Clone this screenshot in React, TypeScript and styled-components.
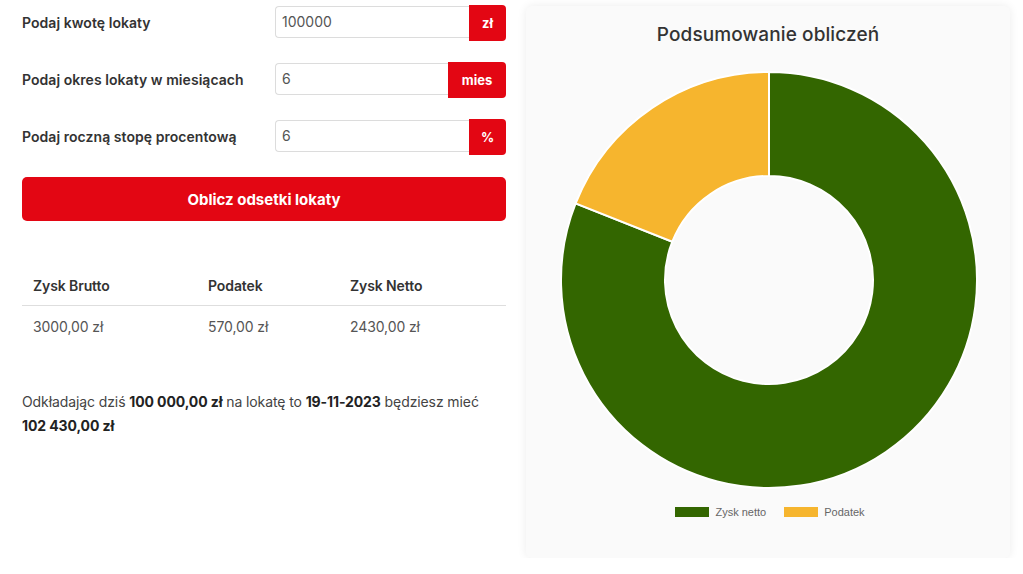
import React from "react";
import styled, { createGlobalStyle } from "styled-components";

const Global = createGlobalStyle`
  html, body { margin: 0; padding: 0; background: #ffffff; }
  body { font-family: Inter, "Open Sans", sans-serif; color: #333; }
`;

const Page = styled.div`
  display: flex;
  align-items: flex-start;
  gap: 20px;
  padding: 5px 13px 0 22px;
`;

const Left = styled.div`
  width: 484px;
  flex: none;
  display: flex;
  flex-direction: column;
`;

const Field = styled.div`
  display: flex;
  align-items: flex-start;
  height: 36px;
  margin-bottom: 21px;
`;

const Label = styled.label`
  width: 253px;
  flex: none;
  font-size: 14px;
  font-weight: 600;
  color: #333;
  line-height: 36px;
  letter-spacing: 0.05px;
`;

const InputBox = styled.div`
  flex: 1;
  height: 32px;
  margin-top: 1px;
  box-sizing: border-box;
  border: 1px solid #dcdcdc;
  border-right: none;
  border-radius: 4px 0 0 4px;
  padding: 0 6px;
  font-size: 14px;
  line-height: 30px;
  color: #555;
  background: #fff;
`;

const Addon = styled.div<{ $w: number }>`
  width: ${(p) => p.$w}px;
  flex: none;
  height: 36px;
  background: #e30613;
  color: #fff;
  font-size: 13px;
  font-weight: 700;
  display: flex;
  align-items: center;
  justify-content: center;
  border-radius: 0 4px 4px 0;
`;

const Button = styled.button`
  margin-top: 1px;
  height: 44px;
  border: none;
  border-radius: 5px;
  background: #e30613;
  color: #fff;
  font-family: inherit;
  font-size: 15px;
  font-weight: 700;
  cursor: pointer;
`;

const Table = styled.div`
  margin-top: 45px;
  display: grid;
  grid-template-columns: 175px 142px 1fr;
`;

const Cell = styled.div<{ $head?: boolean }>`
  height: 40px;
  display: flex;
  align-items: center;
  padding-left: 11px;
  font-size: 14px;
  font-weight: ${(p) => (p.$head ? 600 : 400)};
  color: ${(p) => (p.$head ? "#333" : "#555")};
  border-bottom: ${(p) => (p.$head ? "1.5px solid #dedede" : "none")};
  box-sizing: border-box;
  letter-spacing: -0.1px;
`;

const Summary = styled.p`
  margin: 44px 0 0;
  font-size: 14px;
  line-height: 24px;
  color: #444;
  letter-spacing: -0.1px;
  b { font-weight: 700; color: #222; }
`;

const Card = styled.div`
  width: 484px;
  height: 552px;
  flex: none;
  margin-top: 1px;
  box-sizing: border-box;
  background: #fafafa;
  border-radius: 6px;
  box-shadow: 0 0 10px rgba(0, 0, 0, 0.08);
  display: flex;
  flex-direction: column;
  align-items: center;
  padding-top: 16px;
`;

const Title = styled.h2`
  margin: 0;
  font-size: 19px;
  line-height: 26px;
  font-weight: 500;
  color: #333;
  letter-spacing: 0.1px;
`;

const ChartSvg = styled.svg`
  margin-top: 22px;
  margin-left: 2px;
  display: block;
`;

const Legend = styled.div`
  margin-top: 16px;
  margin-left: 4px;
  display: flex;
  gap: 18px;
  font-family: "Liberation Sans", Arial, sans-serif;
  font-size: 11px;
  color: #666;
`;

const LegendItem = styled.div`
  display: flex;
  align-items: center;
  gap: 6px;
`;

const Swatch = styled.span<{ $c: string }>`
  width: 34px;
  height: 10px;
  background: ${(p) => p.$c};
  display: inline-block;
`;

const GREEN = "#336600";
const YELLOW = "#f6b52e";

function arcPath(cx: number, cy: number, R: number, r: number, a0: number, a1: number) {
  const pt = (rad: number, a: number) => {
    const t = (a * Math.PI) / 180;
    return [cx + rad * Math.sin(t), cy - rad * Math.cos(t)];
  };
  const large = a1 - a0 > 180 ? 1 : 0;
  const [x0, y0] = pt(R, a0);
  const [x1, y1] = pt(R, a1);
  const [x2, y2] = pt(r, a1);
  const [x3, y3] = pt(r, a0);
  return `M${x0} ${y0} A${R} ${R} 0 ${large} 1 ${x1} ${y1} L${x2} ${y2} A${r} ${r} 0 ${large} 0 ${x3} ${y3} Z`;
}

export default function App() {
  const netto = 2430;
  const tax = 570;
  const total = netto + tax;
  const split = (netto / total) * 360;
  return (
    <>
      <Global />
      <Page>
        <Left>
          <Field>
            <Label>Podaj kwotę lokaty</Label>
            <InputBox>100000</InputBox>
            <Addon $w={37}>zł</Addon>
          </Field>
          <Field>
            <Label>Podaj okres lokaty w miesiącach</Label>
            <InputBox>6</InputBox>
            <Addon $w={58}>mies</Addon>
          </Field>
          <Field>
            <Label>Podaj roczną stopę procentową</Label>
            <InputBox>6</InputBox>
            <Addon $w={37}>%</Addon>
          </Field>
          <Button>Oblicz odsetki lokaty</Button>
          <Table>
            <Cell $head>Zysk Brutto</Cell>
            <Cell $head>Podatek</Cell>
            <Cell $head>Zysk Netto</Cell>
            <Cell>3000,00 zł</Cell>
            <Cell>570,00 zł</Cell>
            <Cell>2430,00 zł</Cell>
          </Table>
          <Summary>
            Odkładając dziś <b>100 000,00 zł</b> na lokatę to <b>19-11-2023</b> będziesz mieć
            <br />
            <b>102 430,00 zł</b>
          </Summary>
        </Left>
        <Card>
          <Title>Podsumowanie obliczeń</Title>
          <ChartSvg width="420" height="420" viewBox="0 0 420 420">
            <path d={arcPath(210, 210, 208, 104, 0, split)} fill={GREEN} stroke="#fff" strokeWidth="2" />
            <path d={arcPath(210, 210, 208, 104, split, 360)} fill={YELLOW} stroke="#fff" strokeWidth="2" />
          </ChartSvg>
          <Legend>
            <LegendItem>
              <Swatch $c={GREEN} />
              Zysk netto
            </LegendItem>
            <LegendItem>
              <Swatch $c={YELLOW} />
              Podatek
            </LegendItem>
          </Legend>
        </Card>
      </Page>
    </>
  );
}
